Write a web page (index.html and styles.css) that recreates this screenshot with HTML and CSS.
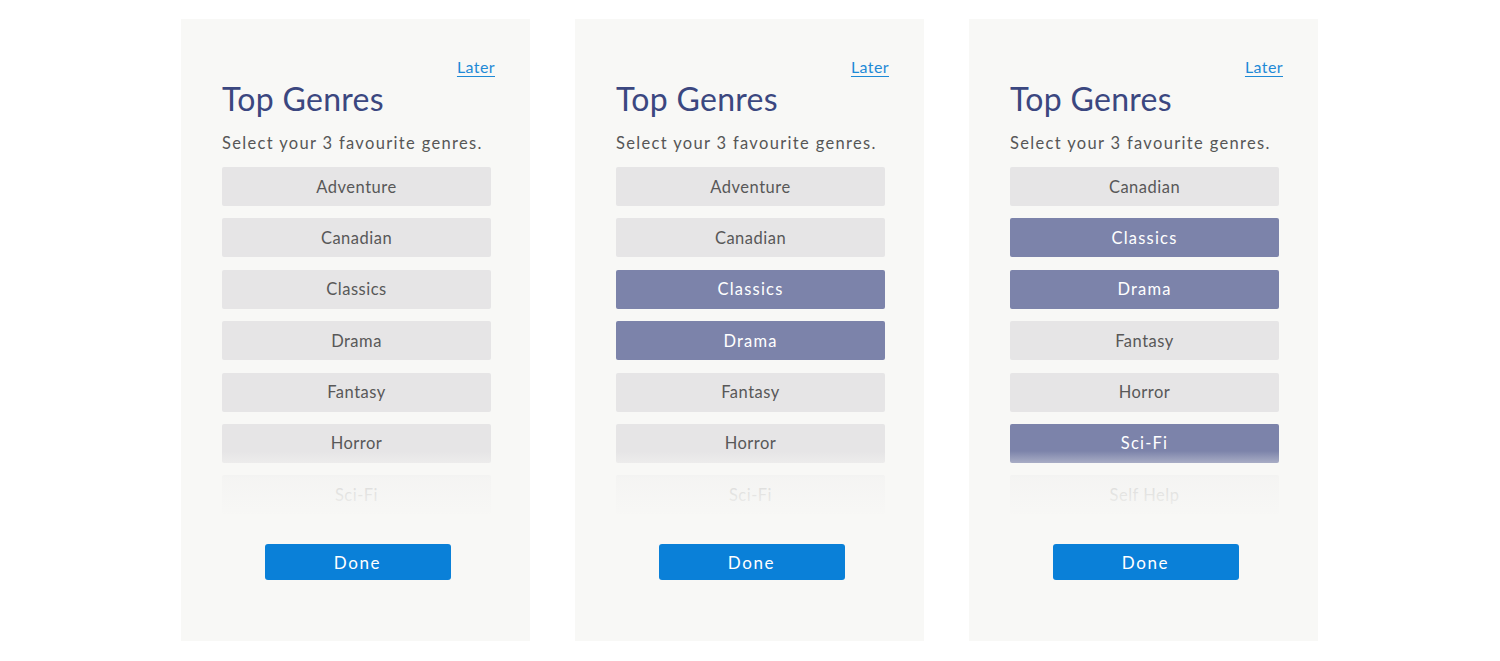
FILE: index.html
```html
<!DOCTYPE html>
<html lang="en">
<head>
<meta charset="utf-8">
<title>Top Genres</title>
<link rel="stylesheet" href="styles.css">
</head>
<body>
<main class="stage">
  <section class="panel">
    <div class="later-row"><a class="later" href="#">Later</a></div>
    <h1 class="title">Top Genres</h1>
    <p class="subtitle">Select your 3 favourite genres.</p>
    <div class="list">
      <div class="genre">Adventure</div>
      <div class="genre">Canadian</div>
      <div class="genre">Classics</div>
      <div class="genre">Drama</div>
      <div class="genre">Fantasy</div>
      <div class="genre">Horror</div>
      <div class="genre">Sci-Fi</div>
    </div>
    <div class="done-row"><button class="done">Done</button></div>
  </section>
  <section class="panel">
    <div class="later-row"><a class="later" href="#">Later</a></div>
    <h1 class="title">Top Genres</h1>
    <p class="subtitle">Select your 3 favourite genres.</p>
    <div class="list">
      <div class="genre">Adventure</div>
      <div class="genre">Canadian</div>
      <div class="genre selected">Classics</div>
      <div class="genre selected">Drama</div>
      <div class="genre">Fantasy</div>
      <div class="genre">Horror</div>
      <div class="genre">Sci-Fi</div>
    </div>
    <div class="done-row"><button class="done">Done</button></div>
  </section>
  <section class="panel">
    <div class="later-row"><a class="later" href="#">Later</a></div>
    <h1 class="title">Top Genres</h1>
    <p class="subtitle">Select your 3 favourite genres.</p>
    <div class="list">
      <div class="genre">Canadian</div>
      <div class="genre selected">Classics</div>
      <div class="genre selected">Drama</div>
      <div class="genre">Fantasy</div>
      <div class="genre">Horror</div>
      <div class="genre selected">Sci-Fi</div>
      <div class="genre">Self Help</div>
    </div>
    <div class="done-row"><button class="done">Done</button></div>
  </section>
</main>
</body>
</html>
```

FILE: styles.css
```css
* { box-sizing: border-box; }

html, body {
  margin: 0;
  padding: 0;
  background: #ffffff;
  font-family: Lato, "Open Sans", "Liberation Sans", sans-serif;
}

.stage {
  display: flex;
  gap: 45px;
  padding: 19px 0 0 181px;
  height: 661px;
}

.panel {
  width: 349px;
  height: 622px;
  background: #f8f8f6;
  padding: 0 35px 0 41px;
  display: flex;
  flex-direction: column;
}

.later-row {
  display: flex;
  justify-content: flex-end;
  padding-top: 38px;
  height: 60px;
}

.later {
  color: #1f8ad6;
  font-size: 16px;
  line-height: 20px;
  letter-spacing: 0.4px;
  text-decoration: underline;
  text-underline-offset: 3px;
}

.title {
  margin: 0;
  font-size: 32px;
  font-weight: 400;
  color: #3b4780;
  line-height: 40px;
  letter-spacing: 0.3px;
}

.subtitle {
  margin: 13px 0 0;
  font-size: 16.5px;
  line-height: 22px;
  color: #565656;
  letter-spacing: 1.33px;
}

.list {
  position: relative;
  margin-top: 13px;
  width: 269px;
  height: 348px;
  overflow: hidden;
  display: flex;
  flex-direction: column;
  gap: 12.4px;
}

.list::after {
  content: "";
  position: absolute;
  left: -4px;
  right: -4px;
  top: 284px;
  height: 64px;
  background: linear-gradient(to bottom, rgba(248,248,246,0) 0%, rgba(248,248,246,0.8) 42%, rgba(248,248,246,0.97) 100%);
}

.genre {
  flex: 0 0 39px;
  height: 39px;
  border-radius: 2px;
  background: #e6e5e6;
  color: #585858;
  font-size: 16.5px;
  display: flex;
  align-items: center;
  justify-content: center;
  letter-spacing: 0.5px;
}

.genre.selected {
  background: #7c83aa;
  color: #ffffff;
  letter-spacing: 1.2px;
}

.done-row {
  display: flex;
  justify-content: center;
  padding-top: 29px;
  padding-right: 2px;
}

.done {
  width: 186px;
  height: 36px;
  border: none;
  border-radius: 3px;
  background: #0a80d8;
  color: #ffffff;
  font-family: Lato, "Open Sans", "Liberation Sans", sans-serif;
  font-size: 17px;
  letter-spacing: 1.6px;
}
```
